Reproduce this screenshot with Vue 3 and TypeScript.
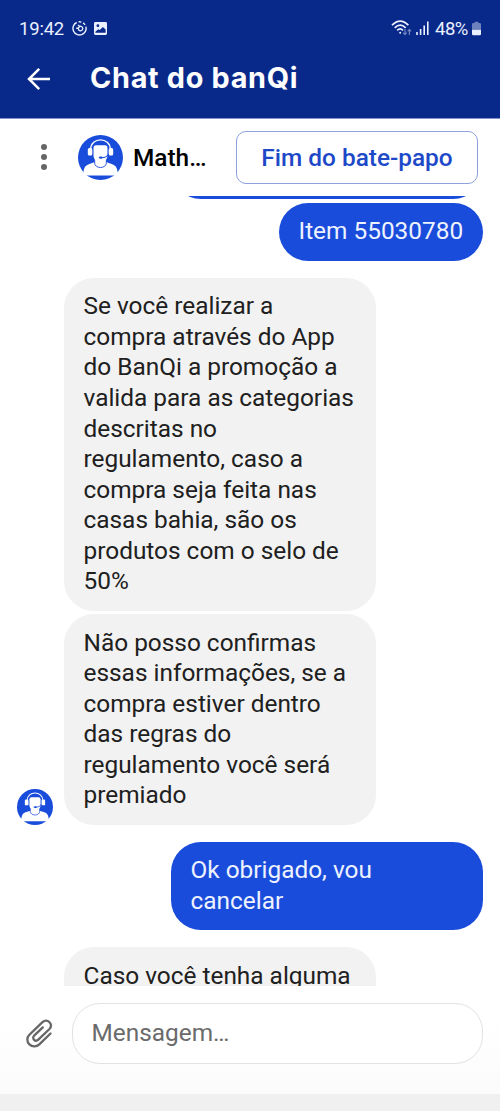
<script setup lang="ts">
import { h, type FunctionalComponent } from 'vue'

interface Message {
  id: number
  side: 'agent' | 'user'
  lines: string[]
  place?: string
  avatar?: boolean
}

const messages: Message[] = [
  { id: 1, side: 'user', lines: ['', ''], place: 'scrolled' },
  { id: 2, side: 'user', lines: ['Item 55030780'], place: 'joined short' },
  {
    id: 3,
    side: 'agent',
    lines: [
      'Se você realizar a', 'compra através do App', 'do BanQi a promoção a',
      'valida para as categorias', 'descritas no', 'regulamento, caso a',
      'compra seja feita nas', 'casas bahia, são os', 'produtos com o selo de', '50%',
    ],
  },
  {
    id: 4,
    side: 'agent',
    lines: [
      'Não posso confirmas', 'essas informações, se a', 'compra estiver dentro',
      'das regras do', 'regulamento você será', 'premiado',
    ],
    place: 'joined',
    avatar: true,
  },
  { id: 5, side: 'user', lines: ['Ok obrigado, vou', 'cancelar'] },
  { id: 6, side: 'agent', lines: ['Caso você tenha alguma', ''] },
]

const AgentAvatar: FunctionalComponent = () =>
  h('svg', { viewBox: '0 0 44 44' }, [
    h('circle', { cx: 22, cy: 22, r: 22, fill: '#1a4cdc' }),
    h('path', { d: 'M5 39.500c.4-7 1.500-9.500 5.500-11L16.500 26.500h11l6 2c4 1.500 5.100 4 5.500 11z', fill: '#fff' }),
    h('path', { d: 'M16.300 23v4.500a5.700 4.300 0 0 0 11.400 0V23', fill: '#fff', stroke: '#1a4cdc', 'stroke-width': 0.9 }),
    h('path', { d: 'M15.200 12.500q0-2.500 2.500-2.500h8.600q2.500 0 2.500 2.500v7.500c0 3.800-3 6-6.800 6s-6.800-2.200-6.800-6z', fill: '#fff' }),
    h('path', { d: 'M12.400 14C12.400 1.700 31.600 1.700 31.600 14', fill: 'none', stroke: '#fff', 'stroke-width': 1.3 }),
    h('rect', { x: 9.6, y: 12.800, width: 4.400, height: 7.200, rx: 1.500, fill: '#fff' }),
    h('rect', { x: 30, y: 12.800, width: 4.400, height: 7.200, rx: 1.500, fill: '#fff' }),
    h('path', { d: 'M30 18.500c-1.400 2.800-4.500 3.800-8 3.700', fill: 'none', stroke: '#1a4cdc', 'stroke-width': 1 }),
    h('ellipse', { cx: 22.300, cy: 22.100, rx: 2, ry: 1.100, fill: '#1a4cdc' }),
  ])
</script>

<template>
  <div class="screen">
    <header class="topbar">
      <div class="status">
        <span class="clock">19:42</span>
        <svg class="timer" viewBox="0 0 16 16" fill="none" stroke="currentColor">
          <path d="M5 1.600A7 7 0 1 0 14.800 6M7 .9a7 7 0 0 1 3 .3M11.800 2.100a7 7 0 0 1 2.100 2" stroke-width="1.500" />
          <path d="M4.500 7.700h2.200A2.400 2.400 0 1 0 8 5.900M6.500 4.200l1.800 1.700-1.700 1.500" stroke-width="1.400" />
        </svg>
        <svg class="picture" viewBox="0 0 14 14">
          <path fill="currentColor" fill-rule="evenodd" d="M1.500 0h11Q14 0 14 1.500v11q0 1.500-1.500 1.500h-11Q0 14 0 12.500v-11Q0 0 1.500 0zM1.500 11.700h11V8.200L9.600 5.400 6.200 8.500 4.600 7.700l-3.100 2.700zM4.200 2.500a1.500 1.500 0 1 0 0 3 1.500 1.500 0 0 0 0-3z" />
        </svg>
        <svg class="wifi" viewBox="0 0 21 16" fill="none" stroke="currentColor">
          <path d="M1 5.200Q9.200-3 17.400 5.200M3.700 7.800Q9.200 2.300 14.700 7.800M6.200 10.300Q9.200 7.400 12 10.300" stroke-width="1.700" />
          <circle cx="9.200" cy="12.700" r="1" fill="currentColor" stroke="none" />
          <path class="faint" d="M14 9v5.500M12.200 12.700l1.800 1.900 1.800-1.900M18.400 15V9.500M16.600 11.300l1.800-1.900 1.800 1.900" stroke-width="1.200" />
        </svg>
        <svg class="signal" viewBox="0 0 13 14" stroke="currentColor" stroke-width="1.600">
          <path d="M1 14v-3M4.600 14V8M8.200 14V4.500M11.800 14V.5" />
        </svg>
        <span class="percent">48%</span>
        <svg class="battery" viewBox="0 0 10 15">
          <path class="faint" fill="currentColor" d="M3 0h4v1.500h1.500Q10 1.500 10 3v6H0V3q0-1.500 1.500-1.500H3z" />
          <path fill="currentColor" d="M0 9h10v4.500q0 1.500-1.500 1.500h-7Q0 15 0 13.500z" />
        </svg>
      </div>
      <div class="titlebar">
        <svg class="back" viewBox="0 0 24 24" fill="none" stroke="currentColor" stroke-width="2.500">
          <path d="M23 12H2.500M12.200 1.800 2 12l10.200 10.200" />
        </svg>
        <h1>Chat do banQi</h1>
      </div>
    </header>

    <section class="agentbar">
      <span class="dots"><i></i><i></i><i></i></span>
      <AgentAvatar class="portrait" />
      <strong>Math…</strong>
      <button type="button">Fim do bate-papo</button>
    </section>

    <main>
      <div v-for="m in messages" :key="m.id" class="row" :class="[m.side, m.place]">
        <AgentAvatar v-if="m.avatar" class="mini" />
        <p class="bubble"><span v-for="(line, i) in m.lines" :key="i">{{ line }}</span></p>
      </div>
    </main>

    <footer class="composer">
      <svg class="clip" viewBox="0 0 28 28" fill="none" stroke="currentColor" stroke-width="2.300" stroke-linecap="round" stroke-linejoin="round">
        <path d="M25.500 14.500 14.300 25.300C11.500 28 7.200 28.100 4.400 25.400s-2.700-6.900 0-9.600L17.500 3.200c2.100-2 5-2 7 0s2 4.800 0 6.800L13.300 20.700c-1.300 1.200-3 1.200-4.200.1s-1.200-2.900 0-4.100L17.800 8.400" />
      </svg>
      <div class="field">Mensagem…</div>
    </footer>
    <div class="navstrip"></div>
  </div>
</template>

<style>
body { margin: 0; background: #fff; }
</style>

<style scoped>
.screen { width: 500px; height: 1111px; display: flex; flex-direction: column; overflow: hidden; background: #fff; font-family: Roboto, sans-serif; }
.topbar { flex: none; height: 118px; background: #09298a; color: #fff; border-bottom: 1px solid #8490cf; box-sizing: content-box; }
.status { display: flex; align-items: center; height: 20px; padding: 19px 19px 0 19px; font-size: 18.500px; line-height: 20px; color: #eaf0ff; }
.clock { width: 45px; white-space: nowrap; letter-spacing: -0.200px; }
.timer { width: 15px; height: 15px; margin: -2px 0 0 8px; }
.picture { width: 13px; height: 13px; margin: -2px 0 0 7px; }
.wifi { width: 21px; height: 16px; margin: -2px 0 0 auto; }
.signal { width: 13px; height: 14px; margin: -2px 0 0 4px; }
.percent { width: 34px; margin-left: 6px; white-space: nowrap; letter-spacing: -0.500px; }
.battery { width: 9px; height: 15px; margin-left: 3px; margin-top: -1px; }
.faint { opacity: .45; }
.titlebar { display: flex; align-items: center; height: 80px; padding-left: 27px; }
.back { width: 24px; height: 24px; }
h1 { margin: -2px 0 0 39px; font: 700 28.800px/36px Inter, sans-serif; letter-spacing: .7px; white-space: nowrap; }
.agentbar { flex: none; height: 77px; display: flex; align-items: center; box-sizing: border-box; padding: 0 22px 1px 41px; }
.dots { width: 6px; display: flex; flex-direction: column; gap: 4px; }
.dots i { width: 6px; height: 6px; border-radius: 50%; background: #666; }
.portrait { width: 45px; height: 45px; margin-left: 31px; }
strong { margin-left: 10px; font-size: 24.400px; font-weight: 500; color: #000; }
button { margin-left: auto; width: 242px; height: 53px; padding: 0; border: 1.500px solid #8ba0dc; border-radius: 10px; background: #fff; color: #1d49c8; font: 500 24.400px Roboto, sans-serif; }
main { flex: none; height: 790px; overflow: hidden; }
.row { display: flex; padding: 0 17px 0 64px; margin-top: 17px; align-items: flex-end; }
.row.scrolled { margin-top: -85.200px; }
.row.joined { margin-top: 3.500px; }
.user { justify-content: flex-end; }
.bubble { width: 312px; box-sizing: border-box; margin: 0; padding: 13.700px 19.500px; border-radius: 30px; background: #f2f2f2; color: #202020; font-size: 24.400px; line-height: 30.560px; }
.bubble span { display: block; height: 30.560px; white-space: nowrap; }
.user .bubble { background: #1a4cdc; color: #edf2ff; }
.short .bubble { width: 204px; }
.mini { flex: none; width: 36px; height: 36px; margin: 0 11px 0 -47px; }
.composer { flex: none; height: 108px; display: flex; box-sizing: border-box; padding: 17px 17px 0 25px; background: linear-gradient(#fff 30%, #fbfbfb); }
.clip { width: 28px; height: 30px; margin: 15px 19px 0 0; color: #666; }
.field { flex: 1; height: 61px; box-sizing: border-box; border: 1.500px solid #e2e2e2; border-radius: 28px; padding-left: 18.500px; background: #fff; color: #6b6b6b; font-size: 24.400px; line-height: 58px; }
.navstrip { flex: 1; background: #f0f0f0; }
</style>
